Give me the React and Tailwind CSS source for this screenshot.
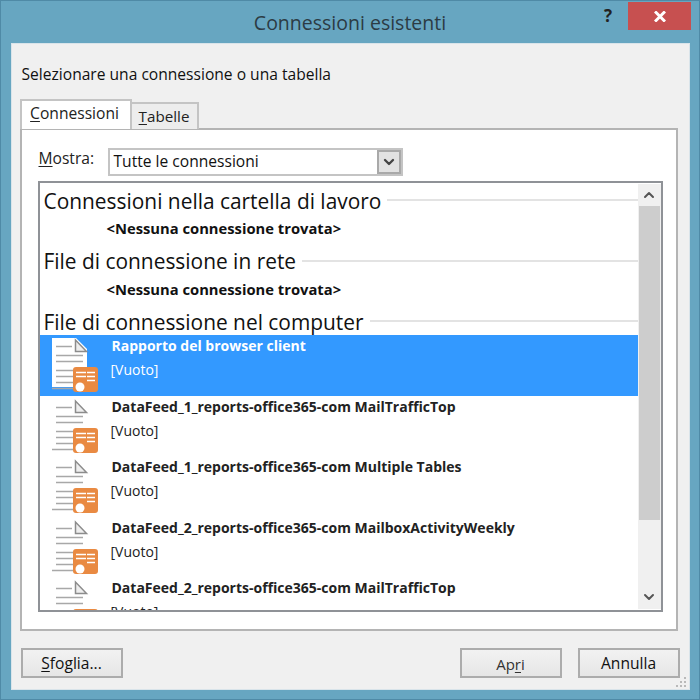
import { ChevronDown, ChevronUp } from "lucide-react";

const ITEMS = [
  { title: "Rapporto del browser client", selected: true },
  { title: "DataFeed_1_reports-office365-com MailTrafficTop" },
  { title: "DataFeed_1_reports-office365-com Multiple Tables" },
  { title: "DataFeed_2_reports-office365-com MailboxActivityWeekly" },
  { title: "DataFeed_2_reports-office365-com MailTrafficTop" },
];

function FileIcon({ selected }) {
  return (
    <svg width="46" height="56" viewBox="0 0 46 56" className="shrink-0">
      {selected && <path d="M0 0H24L35 11V49H0Z" fill="#fff" />}
      <path d="M23.5 2V13.5H34.5Z" fill="#eee" stroke="#8c8c8c" strokeWidth="1.5" />
      <path d="M4 8.5H20M4 17.5H31M4 23.5H31M4 32.5H21M4 38.5H21M4 44.5H21M0 50.5H21" stroke="#a8a8a8" strokeWidth="1.5" fill="none" />
      <rect x="21" y="29" width="25" height="25" rx="3" fill="#e98a42" />
      <path d="M24 34.5H34M35 34.5H43M24 38.5H34M35 38.5H43M35 42.5H43" stroke="#fff" strokeWidth="1.5" fill="none" />
      <circle cx="28" cy="49" r="4.5" fill="#fff" />
    </svg>
  );
}

function GroupHeading({ text }) {
  return (
    <div className="h-[28px] shrink-0 flex items-center pl-[4px] pt-[2px]">
      <span className="text-[20.9px] leading-none text-[#111] whitespace-nowrap">{text}</span>
      <span className="flex-1 h-[2px] bg-[#e3e3e3] ml-[6px] -mt-[2px]" />
    </div>
  );
}

function EmptyNote() {
  return (
    <div className="h-[32.5px] shrink-0 pl-[67px] pt-[4px] text-[14.75px] leading-[20px] font-bold text-[#111]">
      &lt;Nessuna connessione trovata&gt;
    </div>
  );
}

function Row({ title, selected }) {
  return (
    <div className={`h-[60.5px] shrink-0 flex pl-[12px] pt-[3px] ${selected ? "bg-[#3399ff] text-white" : "text-[#222]"}`}>
      <FileIcon selected={selected} />
      <div className="pl-[14px]">
        <div className="h-[22px] text-[14px] leading-[16px] font-bold whitespace-nowrap">{title}</div>
        <div className="text-[14px] leading-[20px] -ml-[1px]">[Vuoto]</div>
      </div>
    </div>
  );
}

function Btn({ children, className = "" }) {
  return (
    <button className={`w-[102px] h-[30px] pt-[2px] border-2 border-[#acacac] bg-gradient-to-b from-[#f2f2f2] to-[#e6e6e6] text-[15.6px] leading-none text-[#111] ${className}`}>
      {children}
    </button>
  );
}

export default function App() {
  return (
    <div className="w-[700px] h-[700px] flex flex-col bg-[#67a6c1] border border-[#4f8aa6] overflow-hidden" style={{ fontFamily: '"Open Sans", "Noto Sans", sans-serif' }}>
      {/* Title bar */}
      <div className="relative h-[42px] shrink-0 flex items-center justify-center text-[19.5px] text-[#2c3b44] pt-[1px]">
        Connessioni esistenti
        <span className="absolute left-[603px] top-[3px] text-[17px] leading-[24px] font-bold text-[#222]">?</span>
        <div className="absolute left-[627px] top-[1px] w-[63px] h-[28px] bg-[#c75050] flex items-center justify-center">
          <svg width="12" height="11" viewBox="0 0 12 11">
            <path d="M1 0.5L11 10.5M11 0.5L1 10.5" stroke="#fff" strokeWidth="3" />
          </svg>
        </div>
      </div>

      {/* Client area */}
      <div className="relative mx-[9.5px] h-[647px] bg-[#f0f0f0] border border-[#d9e4ea] flex flex-col pl-[8px] pr-[10px]">
        <div className="h-[55px] pt-[20px] pl-[2px] text-[15.6px] leading-[20px] text-[#111] whitespace-nowrap">Selezionare una connessione o una tabella</div>

        {/* Tabs */}
        <div className="flex items-end h-[30px] relative z-10 -mb-[1px]">
          <div className="w-[112px] h-[30px] pr-[2px] bg-white border-2 border-b-0 border-[#c4c4c4] text-[15.6px] leading-[24px] text-center text-[#222]">
            <span className="underline underline-offset-2">C</span>onnessioni
          </div>
          <div className="w-[67px] h-[27px] bg-[#ededed] border-2 border-l-0 border-[#c4c4c4] border-b-0 text-[15.2px] leading-[25px] text-center text-[#222]">
            <span className="underline underline-offset-2">T</span>abelle
          </div>
        </div>

        {/* Tab panel */}
        <div className="w-[658px] h-[503px] bg-white border-2 border-[#b4b4b4] pl-[16px] pr-[13px] flex flex-col">
          <div className="flex items-start h-[51px] shrink-0 pt-[18px]">
            <span className="w-[70px] pl-[1px] text-[15.6px] leading-[20px] text-[#222]">
              <span className="underline underline-offset-2">M</span>ostra:
            </span>
            <div className="w-[295px] h-[28px] border-2 border-[#c4c4c4] flex items-center justify-between pl-[4px] text-[15.6px] text-[#111]">
              Tutte le connessioni
              <div className="w-[24px] h-[24px] bg-[#e2e2e2] border-2 border-[#a9a9a9] flex items-center justify-center">
                <ChevronDown size={16} strokeWidth={3.5} className="text-[#444]" />
              </div>
            </div>
          </div>

          {/* List */}
          <div className="h-[431px] shrink-0 border-2 border-[#8f9297] flex overflow-hidden">
            <div className="flex-1 flex flex-col overflow-hidden min-w-0">
              <div className="h-[3px] shrink-0" />
              <GroupHeading text="Connessioni nella cartella di lavoro" />
              <EmptyNote />
              <GroupHeading text="File di connessione in rete" />
              <EmptyNote />
              <GroupHeading text="File di connessione nel computer" />
              {ITEMS.map((it) => (
                <Row key={it.title} title={it.title} selected={it.selected} />
              ))}
            </div>
            {/* Scrollbar */}
            <div className="w-[23px] shrink-0 bg-[#f0f0f0] flex flex-col my-[1px]">
              <div className="h-[22px] flex items-center justify-center">
                <ChevronUp size={16} strokeWidth={3} className="text-[#555]" />
              </div>
              <div className="h-[314px] bg-[#cdcdcd] mx-[1px]" />
              <div className="flex-1" />
              <div className="h-[24px] flex items-center justify-center">
                <ChevronDown size={16} strokeWidth={3} className="text-[#555]" />
              </div>
            </div>
          </div>
        </div>

        {/* Footer buttons */}
        <div className="flex mt-[17px]">
          <Btn className="ml-[1px]">
            <span className="underline underline-offset-2">S</span>foglia...
          </Btn>
          <Btn className="ml-auto mr-[16px] !text-[#333] !text-[15px]">
            Ap<span className="underline underline-offset-2">r</span>i
          </Btn>
          <Btn className="mr-[-1px]">Annulla</Btn>
        </div>

        {/* Resize grip */}
        <svg width="12" height="12" viewBox="0 0 12 12" className="absolute right-[1px] bottom-[1px]">
          <path d="M8 1h2v2H8zM4 5h2v2H4zM8 5h2v2H8zM0 9h2v2H0zM4 9h2v2H4zM8 9h2v2H8z" fill="#b9b9b9" />
        </svg>
      </div>
    </div>
  );
}
